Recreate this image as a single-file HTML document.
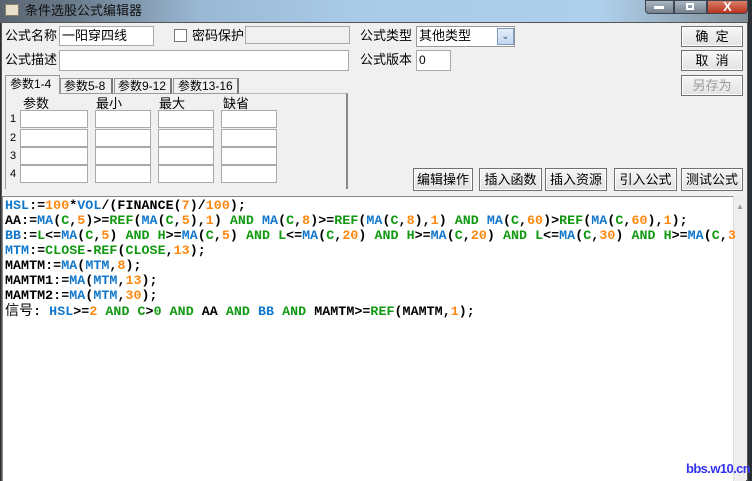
<!DOCTYPE html><html><head><meta charset="utf-8"><style>
*{margin:0;padding:0;box-sizing:border-box}
body{width:752px;height:481px;overflow:hidden;background:#2a2f33;font-family:"Liberation Sans","Noto Sans CJK SC",sans-serif;font-size:12px;position:relative;color:#000}
.a{position:absolute}
.tb{left:0;top:0;width:752px;height:23px;background:linear-gradient(90deg,#5a6470 0,#6d7f8f 80px,#9ab8d4 200px,#a9cbe8 360px,#afd0ec 600px,#7d8a93 752px)}
.in{position:absolute;background:#fff;border:1px solid #a9a9a9}
.lb{position:absolute;font-size:13px;line-height:16px;white-space:nowrap}
.btn{position:absolute;background:linear-gradient(#f6f6f6,#e2e2e2);border:1px solid #707070;font-size:13px;text-align:center;line-height:19px;box-shadow:inset 0 0 0 1px #fff}
.code{position:absolute;left:5px;top:198px;font-family:"Liberation Mono",monospace;font-weight:bold;font-size:13.3px;line-height:15px;white-space:pre;letter-spacing:0.05px}
.b{color:#1177cc}.g{color:#119911}.o{color:#ff8811}
</style></head><body>
<div class="a tb"></div>
<div class="a" style="left:5px;top:4px;width:14px;height:12px;background:#e8e0cc;border:1px solid #8a7f6a"></div>
<div class="lb" style="left:25px;top:3px;color:#111">条件选股公式编辑器</div>
<div class="a" style="left:645px;top:0;width:29px;height:14px;background:linear-gradient(#a9b6c4,#75808c);border:1px solid #3d4650;border-radius:0 0 0 4px"></div>
<div class="a" style="left:654px;top:6px;width:10px;height:3px;background:#fff"></div>
<div class="a" style="left:674px;top:0;width:33px;height:14px;background:linear-gradient(#a9b6c4,#75808c);border:1px solid #3d4650"></div>
<div class="a" style="left:686px;top:3px;width:8px;height:7px;border:2px solid #fff"></div>
<div class="a" style="left:707px;top:0;width:41px;height:14px;background:linear-gradient(#d9806a,#b8321c);border:1px solid #3d4650;border-radius:0 0 4px 0;color:#fff;font-weight:bold;text-align:center;line-height:11px;font-size:13px">X</div>
<div class="a" style="left:1px;top:22px;width:747px;height:459px;background:#f0f0f0;border:1px solid #555"></div>
<div class="lb" style="left:5px;top:28px">公式名称</div>
<div class="in" style="left:59px;top:26px;width:95px;height:20px"></div>
<div class="lb" style="left:62px;top:28px">一阳穿四线</div>
<div class="a" style="left:174px;top:29px;width:13px;height:13px;background:#fff;border:1px solid #777"></div>
<div class="lb" style="left:192px;top:28px">密码保护</div>
<div class="in" style="left:245px;top:26px;width:105px;height:18px;background:#f0f0f0"></div>
<div class="lb" style="left:360px;top:28px">公式类型</div>
<div class="in" style="left:416px;top:26px;width:99px;height:21px;border-color:#999"></div>
<div class="lb" style="left:419px;top:28px">其他类型</div>
<div class="a" style="left:497px;top:28px;width:17px;height:17px;background:linear-gradient(#e4eefa,#c3d6ee);border:1px solid #7b98c0;color:#3c5a84;font-size:10px;text-align:center;line-height:15px">&#x2304;</div>
<div class="btn" style="left:681px;top:26px;width:62px;height:21px">确 &nbsp;定</div>
<div class="btn" style="left:681px;top:50px;width:62px;height:21px">取 &nbsp;消</div>
<div class="btn" style="left:681px;top:75px;width:62px;height:21px;color:#999">另存为</div>
<div class="lb" style="left:5px;top:52px">公式描述</div>
<div class="in" style="left:59px;top:50px;width:290px;height:21px"></div>
<div class="lb" style="left:360px;top:52px">公式版本</div>
<div class="in" style="left:416px;top:50px;width:35px;height:21px"></div>
<div class="lb" style="left:419px;top:52px;font-size:12px">0</div>
<div class="a" style="left:5px;top:93px;width:343px;height:96px;border:1px solid #999;border-top-color:#bbb;background:#f0f0f0;border-right:2px solid #888;border-bottom:0"></div>
<div class="a" style="left:5px;top:75px;width:55px;height:19px;background:#f0f0f0;border:1px solid #999;border-bottom:0"></div>
<div class="lb" style="left:10px;top:76px;font-size:12px">参数1-4</div>
<div class="a" style="left:60px;top:78px;width:53px;height:16px;border:1px solid #999;border-right:2px solid #777;background:#f0f0f0"></div>
<div class="lb" style="left:64px;top:78px;font-size:12px">参数5-8</div>
<div class="a" style="left:114px;top:78px;width:58px;height:16px;border:1px solid #999;border-right:2px solid #777;background:#f0f0f0"></div>
<div class="lb" style="left:118px;top:78px;font-size:12px">参数9-12</div>
<div class="a" style="left:173px;top:78px;width:66px;height:16px;border:1px solid #999;border-right:2px solid #777;background:#f0f0f0"></div>
<div class="lb" style="left:178px;top:78px;font-size:12px">参数13-16</div>
<div class="lb" style="left:23px;top:96px">参数</div><div class="lb" style="left:96px;top:96px">最小</div><div class="lb" style="left:159px;top:96px">最大</div><div class="lb" style="left:223px;top:96px">缺省</div>
<div class="lb" style="left:10px;top:111px;font-size:11px">1</div><div class="lb" style="left:10px;top:130px;font-size:11px">2</div><div class="lb" style="left:10px;top:148px;font-size:11px">3</div><div class="lb" style="left:10px;top:166px;font-size:11px">4</div>
<div class="in" style="left:20px;top:110px;width:68px;height:18px"></div><div class="in" style="left:95px;top:110px;width:56px;height:18px"></div><div class="in" style="left:158px;top:110px;width:56px;height:18px"></div><div class="in" style="left:221px;top:110px;width:56px;height:18px"></div>
<div class="in" style="left:20px;top:129px;width:68px;height:18px"></div><div class="in" style="left:95px;top:129px;width:56px;height:18px"></div><div class="in" style="left:158px;top:129px;width:56px;height:18px"></div><div class="in" style="left:221px;top:129px;width:56px;height:18px"></div>
<div class="in" style="left:20px;top:147px;width:68px;height:18px"></div><div class="in" style="left:95px;top:147px;width:56px;height:18px"></div><div class="in" style="left:158px;top:147px;width:56px;height:18px"></div><div class="in" style="left:221px;top:147px;width:56px;height:18px"></div>
<div class="in" style="left:20px;top:165px;width:68px;height:18px"></div><div class="in" style="left:95px;top:165px;width:56px;height:18px"></div><div class="in" style="left:158px;top:165px;width:56px;height:18px"></div><div class="in" style="left:221px;top:165px;width:56px;height:18px"></div>
<div class="btn" style="left:413px;top:168px;width:60px;height:23px;line-height:21px">编辑操作</div>
<div class="btn" style="left:479px;top:168px;width:63px;height:23px;line-height:21px">插入函数</div>
<div class="btn" style="left:545px;top:168px;width:62px;height:23px;line-height:21px">插入资源</div>
<div class="btn" style="left:614px;top:168px;width:63px;height:23px;line-height:21px">引入公式</div>
<div class="btn" style="left:681px;top:168px;width:62px;height:23px;line-height:21px">测试公式</div>
<div class="a" style="left:2px;top:196px;width:731px;height:285px;background:#fff;border-top:1px solid #888;border-left:1px solid #888"></div>
<div class="a" style="left:733px;top:196px;width:13px;height:285px;background:#eee;border-left:1px solid #ddd"></div>
<div class="a" style="left:736px;top:202px;color:#999;font-size:8px">▲</div>
<div class="a" style="left:748px;top:0;width:4px;height:481px;background:#2a2f33"></div>
<div class="code"><span class="b">HSL</span>:=<span class="o">100</span>*<span class="b">VOL</span>/(FINANCE(<span class="o">7</span>)/<span class="o">100</span>);
AA:=<span class="b">MA</span>(<span class="g">C</span>,<span class="o">5</span>)&gt;=<span class="g">REF</span>(<span class="b">MA</span>(<span class="g">C</span>,<span class="o">5</span>),<span class="o">1</span>) <span class="g">AND</span> <span class="b">MA</span>(<span class="g">C</span>,<span class="o">8</span>)&gt;=<span class="g">REF</span>(<span class="b">MA</span>(<span class="g">C</span>,<span class="o">8</span>),<span class="o">1</span>) <span class="g">AND</span> <span class="b">MA</span>(<span class="g">C</span>,<span class="o">60</span>)&gt;<span class="g">REF</span>(<span class="b">MA</span>(<span class="g">C</span>,<span class="o">60</span>),<span class="o">1</span>);
<span class="b">BB</span>:=<span class="g">L</span>&lt;=<span class="b">MA</span>(<span class="g">C</span>,<span class="o">5</span>) <span class="g">AND</span> <span class="g">H</span>&gt;=<span class="b">MA</span>(<span class="g">C</span>,<span class="o">5</span>) <span class="g">AND</span> <span class="g">L</span>&lt;=<span class="b">MA</span>(<span class="g">C</span>,<span class="o">20</span>) <span class="g">AND</span> <span class="g">H</span>&gt;=<span class="b">MA</span>(<span class="g">C</span>,<span class="o">20</span>) <span class="g">AND</span> <span class="g">L</span>&lt;=<span class="b">MA</span>(<span class="g">C</span>,<span class="o">30</span>) <span class="g">AND</span> <span class="g">H</span>&gt;=<span class="b">MA</span>(<span class="g">C</span>,<span class="o">3</span>
<span class="b">MTM</span>:=<span class="g">CLOSE</span>-<span class="g">REF</span>(<span class="g">CLOSE</span>,<span class="o">13</span>);
MAMTM:=<span class="b">MA</span>(<span class="b">MTM</span>,<span class="o">8</span>);
MAMTM1:=<span class="b">MA</span>(<span class="b">MTM</span>,<span class="o">13</span>);
MAMTM2:=<span class="b">MA</span>(<span class="b">MTM</span>,<span class="o">30</span>);
<span style="font-family:'Noto Sans CJK SC',sans-serif;font-weight:normal;font-size:14px">信号</span>: <span class="b">HSL</span>&gt;=<span class="o">2</span> <span class="g">AND</span> <span class="g">C</span>&gt;<span class="g">0</span> <span class="g">AND</span> AA <span class="g">AND</span> <span class="b">BB</span> <span class="g">AND</span> MAMTM&gt;=<span class="g">REF</span>(MAMTM,<span class="o">1</span>);</div>
<div class="a" style="left:686px;top:461px;color:#3333ee;font-weight:bold;font-size:13px;line-height:15px;font-family:'Liberation Sans',sans-serif;letter-spacing:-0.6px;white-space:nowrap">bbs.w10.cn</div>
</body></html>
